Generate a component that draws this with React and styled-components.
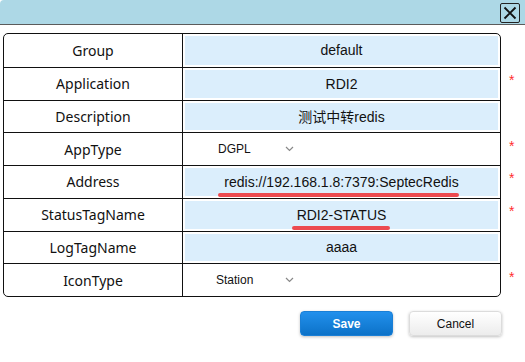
import React from 'react';
import styled, { createGlobalStyle } from 'styled-components';

const GlobalStyle = createGlobalStyle`
  html, body {
    margin: 0;
    padding: 0;
    background: #ffffff;
  }
  body {
    font-family: "Liberation Sans", Arial, sans-serif;
  }
`;

const Window = styled.div`
  width: 525px;
  height: 362px;
  background: #ffffff;
  display: flex;
  flex-direction: column;
  overflow: hidden;
`;

const TitleBar = styled.div`
  height: 24px;
  background: #add8e6;
  border-bottom: 1px solid #5b5b5b;
  border-top-left-radius: 4px;
  display: flex;
  align-items: center;
  justify-content: flex-end;
  padding-right: 5px;
  flex-shrink: 0;
`;

const CloseButton = styled.button`
  width: 20px;
  height: 20px;
  padding: 0;
  margin-top: 1px;
  border: 1px solid #222;
  border-radius: 2px;
  background: transparent;
  display: flex;
  align-items: center;
  justify-content: center;
`;

const Body = styled.div`
  padding: 8px 0 0 3px;
  display: flex;
  flex-direction: column;
`;

const FormRow = styled.div`
  display: flex;
`;

const Table = styled.div`
  width: 498px;
  box-sizing: border-box;
  border: 1px solid #111;
  border-radius: 5px;
  display: flex;
  flex-direction: column;
`;

const Row = styled.div`
  height: 32.75px;
  display: flex;
  box-sizing: border-box;
  border-top: ${p => (p.$first ? 'none' : '1px solid #111')};
`;

const Label = styled.div`
  width: 178px;
  flex-shrink: 0;
  border-right: 1px solid #111;
  display: flex;
  align-items: center;
  justify-content: center;
  font-family: "Noto Sans", "Open Sans", sans-serif;
  font-size: 14px;
  color: #111;
`;

const Value = styled.div`
  flex: 1;
  padding: 2px;
  display: flex;
`;

const InputBox = styled.div`
  flex: 1;
  background: #dbeefc;
  display: flex;
  align-items: center;
  justify-content: center;
  font-family: "Liberation Sans", Arial, "Noto Sans CJK SC", sans-serif;
  font-size: 14px;
  color: #111;
`;

const SelectBox = styled.div`
  flex: 1;
  display: flex;
  align-items: center;
  padding-left: ${p => p.$pad}px;
  font-family: "Liberation Sans", Arial, sans-serif;
  font-size: 12px;
  color: #111;
`;

const SelectText = styled.span`
  width: ${p => p.$w}px;
`;

const Marked = styled.span`
  position: relative;
  &::after {
    content: '';
    position: absolute;
    left: ${p => -p.$l}px;
    right: ${p => -p.$r}px;
    bottom: -7px;
    height: 4px;
    border-radius: 2px;
    background: #ec4a50;
  }
`;

const Stars = styled.div`
  width: 24px;
  padding-top: 1px;
  display: flex;
  flex-direction: column;
`;

const StarCell = styled.div`
  height: 32.75px;
  padding-left: 8px;
  display: flex;
  align-items: center;
  color: #ff2d2d;
  font-family: "Liberation Sans", Arial, sans-serif;
  font-size: 14px;
  line-height: 1;
  margin-top: -3px;
  margin-bottom: 3px;
`;

const Actions = styled.div`
  display: flex;
  justify-content: flex-end;
  gap: 16px;
  padding-right: 23px;
  margin-top: 14px;
`;

const Button = styled.button`
  width: 93px;
  height: 25px;
  border-radius: 4px;
  font-family: "Liberation Sans", Arial, sans-serif;
  font-size: 12px;
  cursor: pointer;
  box-shadow: 0 1px 3px rgba(0, 0, 0, 0.25);
  border: ${p => (p.$primary ? '1px solid #1a7fd6' : '1px solid #dcdcdc')};
  background: ${p =>
    p.$primary
      ? 'linear-gradient(#2290ec, #0c72c8)'
      : 'linear-gradient(#ffffff, #ececec)'};
  color: ${p => (p.$primary ? '#fff' : '#111')};
  font-weight: ${p => (p.$primary ? 'bold' : 'normal')};
`;

const Chevron = () => (
  <svg width="9" height="6" viewBox="0 0 9 6">
    <path d="M1 1l3.5 3.5L8 1" fill="none" stroke="#888" strokeWidth="1.2" />
  </svg>
);

const rows = [
  { label: 'Group', value: 'default' },
  { label: 'Application', value: 'RDI2', required: true },
  { label: 'Description', value: '测试中转redis' },
  { label: 'AppType', select: 'DGPL', required: true },
  { label: 'Address', value: 'redis://192.168.1.8:7379:SeptecRedis', required: true, mark: [6, 0] },
  { label: 'StatusTagName', value: 'RDI2-STATUS', required: true, mark: [5, 4] },
  { label: 'LogTagName', value: 'aaaa' },
  { label: 'IconType', select: 'Station', required: true },
];

export default function App() {
  return (
    <Window>
      <GlobalStyle />
      <TitleBar>
        <CloseButton>
          <svg width="14" height="14" viewBox="0 0 14 14">
            <path d="M1.5 1.5l11 11M12.5 1.5l-11 11" stroke="#111" strokeWidth="1.9" />
          </svg>
        </CloseButton>
      </TitleBar>
      <Body>
        <FormRow>
          <Table>
            {rows.map((r, i) => (
              <Row key={r.label} $first={i === 0}>
                <Label>{r.label}</Label>
                <Value>
                  {r.select ? (
                    <SelectBox $pad={r.select === 'DGPL' ? 33 : 31}>
                      <SelectText $w={r.select === 'DGPL' ? 67 : 69}>{r.select}</SelectText>
                      <Chevron />
                    </SelectBox>
                  ) : (
                    <InputBox>
                      {r.mark ? (
                        <Marked $l={r.mark[0]} $r={r.mark[1]}>{r.value}</Marked>
                      ) : (
                        r.value
                      )}
                    </InputBox>
                  )}
                </Value>
              </Row>
            ))}
          </Table>
          <Stars>
            {rows.map(r => (
              <StarCell key={r.label}>{r.required ? '*' : ''}</StarCell>
            ))}
          </Stars>
        </FormRow>
        <Actions>
          <Button $primary>Save</Button>
          <Button>Cancel</Button>
        </Actions>
      </Body>
    </Window>
  );
}
